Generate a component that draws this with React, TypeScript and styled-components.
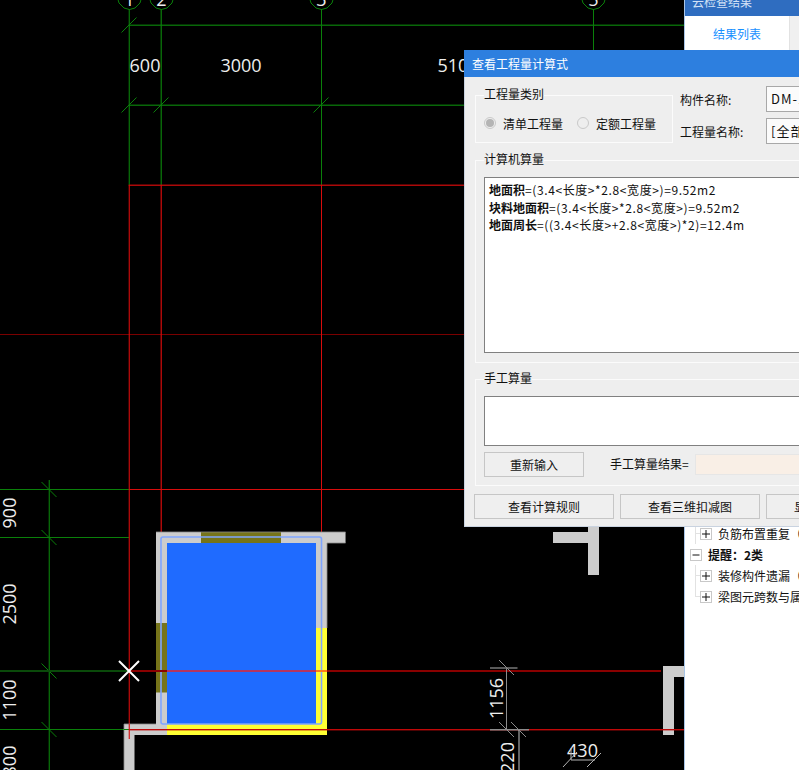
import React from 'react';
import styled, { createGlobalStyle } from 'styled-components';

const GlobalStyle = createGlobalStyle`
  html, body { margin: 0; padding: 0; background: #000; }
  body { font-family: "Noto Sans CJK SC", "Liberation Sans", sans-serif; font-size: 12px; color: #111; }
`;

const Page = styled.div`
  position: relative;
  display: flex;
  width: 799px;
  height: 770px;
  overflow: hidden;
  background: #000;
`;

const Canvas = styled.svg`
  display: block;
  flex: 0 0 684px;
  width: 684px;
  height: 770px;
  background: #000;
  text {
    font-family: "Open Sans", sans-serif;
    font-size: 18px;
    fill: #eeeeee;
  }
`;

const SidePanel = styled.aside`
  flex: 1;
  display: flex;
  flex-direction: column;
  border-left: 1px solid #a9c6e8;
  background: #fff;
`;

const PanelHeader = styled.div`
  height: 16px;
  display: flex;
  align-items: flex-end;
  overflow: hidden;
  padding: 0 0 6px 7px;
  box-sizing: border-box;
  background: #2f6dc0;
  color: #d3e2f6;
  line-height: 16px;
  white-space: nowrap;
  flex: none;
`;

const TabBar = styled.div`
  display: flex;
  height: 34px;
  background: #f0f0f0;
  flex: none;
`;

const Tab = styled.div`
  width: 104px;
  display: flex;
  align-items: center;
  justify-content: center;
  background: #fff;
  border-right: 1px solid #e2e2e2;
  color: #1890ff;
`;

const Tree = styled.div`
  padding-top: 473px;
  display: flex;
  flex-direction: column;
`;

const TreeRow = styled.div<{ $level: number; $last?: boolean }>`
  position: relative;
  height: 21px;
  display: flex;
  align-items: center;
  gap: 6px;
  padding-left: ${p => 5 + p.$level * 10}px;
  white-space: nowrap;
  font-weight: ${p => (p.$level === 0 ? 700 : 400)};

  ${p => p.$level === 1 && `
    &::before {
      content: '';
      position: absolute;
      left: 10px;
      top: 0;
      height: ${p.$last ? '10px' : '21px'};
      border-left: 1px solid #e2e2e2;
    }
    &::after {
      content: '';
      position: absolute;
      left: 10px;
      top: 10px;
      width: 5px;
      border-top: 1px solid #e2e2e2;
    }
  `}
`;

const ToggleBox = styled.svg`
  flex: none;
  width: 12px;
  height: 12px;
  background: #fff;
  position: relative;
  z-index: 1;
`;

const Dialog = styled.section`
  position: absolute;
  left: 464px;
  top: 50px;
  width: 470px;
  height: 477px;
  box-sizing: border-box;
  border-left: 1px solid #c9d3e0;
  border-bottom: 1px solid #c9d3e0;
  background: #eeeeee;
  display: flex;
  flex-direction: column;
`;

const TitleBar = styled.header`
  height: 27px;
  flex: none;
  margin-left: -1px;
  padding-left: 8px;
  display: flex;
  align-items: center;
  background: #2d7fdf;
  color: #fff;
`;

const DialogBody = styled.div`
  padding: 10px 10px 0;
  display: flex;
  flex-direction: column;
  gap: 8px;
`;

const TopRow = styled.div`
  display: flex;
  gap: 7px;
`;

const Group = styled.fieldset<{ $height: number; $width?: number }>`
  margin: 0;
  box-sizing: border-box;
  height: ${p => p.$height}px;
  width: ${p => (p.$width ? `${p.$width}px` : 'auto')};
  padding: 0 8px;
  border: 1px solid #fbfbfb;
  min-width: 0;
`;

const GroupTitle = styled.legend`
  margin-left: 0;
  padding: 0;
  height: 16px;
  line-height: 13px;
`;

const RadioRow = styled.div`
  display: flex;
  align-items: center;
  height: 24px;
  margin-top: 8px;
  white-space: nowrap;
`;

const RadioOption = styled.label`
  display: flex;
  align-items: center;
  gap: 7px;
  margin-right: 14px;
  flex: none;
`;

const RadioMark = styled.span<{ $checked?: boolean }>`
  width: 12px;
  height: 12px;
  box-sizing: border-box;
  border-radius: 50%;
  border: 1px solid #c9c9c9;
  background: #eee;
  display: flex;
  align-items: center;
  justify-content: center;
  &::after {
    content: '';
    width: 8px;
    height: 8px;
    border-radius: 50%;
    background: ${p => (p.$checked ? '#b4b4b4' : 'transparent')};
  }
`;

const FieldGrid = styled.div`
  display: grid;
  grid-template-columns: 86px 150px;
  grid-auto-rows: 26px;
  row-gap: 6px;
  margin-top: -1px;
  align-items: center;
`;

const FieldBox = styled.div`
  height: 26px;
  box-sizing: border-box;
  border: 1px solid #a8a8a8;
  background: #fbfbfb;
  padding-left: 4px;
  line-height: 24px;
  font-size: 13px;
  letter-spacing: 1px;
`;

const FormulaBox = styled.div`
  height: 176px;
  margin-top: 9px;
  box-sizing: border-box;
  border: 1px solid #808080;
  background: #fff;
  padding: 3px 4px;
`;

const FormulaLine = styled.div`
  height: 17.5px;
  line-height: 17.5px;
  white-space: nowrap;
  letter-spacing: 0.6px;
  b { font-weight: 700; letter-spacing: 0; }
`;

const ManualBox = styled.div`
  height: 50px;
  margin-top: 9px;
  box-sizing: border-box;
  border: 1px solid #808080;
  background: #fff;
`;

const ManualRow = styled.div`
  display: flex;
  align-items: center;
  margin-top: 6px;
`;

const PlainButton = styled.button<{ $width: number }>`
  width: ${p => p.$width}px;
  height: 25px;
  flex: none;
  margin: 0;
  padding: 0;
  box-sizing: border-box;
  border: 1px solid #c6c6c6;
  background: #efefef;
  color: #111;
  font: inherit;
  white-space: nowrap;
`;

const ResultLabel = styled.span`
  margin: 0 6px 2px 26px;
`;

const ResultBox = styled.div`
  width: 200px;
  height: 21px;
  margin-bottom: 1px;
  box-sizing: border-box;
  border: 1px solid #e6e6e6;
  background: #f9efe6;
`;

const ActionRow = styled.div`
  display: flex;
  gap: 6px;
  margin-left: -1px;
`;

const green = '#0a800a';
const red = '#d80c0c';

type Bar = [number, number, number, number];
type Seg = [number, number, number, number];

// the drawing's lines sit between pixels, so some bars are on fractional coordinates on purpose
const greenBars: Bar[] = [
  [128.7, 24.6, 555.3, 1.2], [128.7, 104.6, 555.3, 1.2],
  [128.7, 9, 1.1, 176], [160.6, 9, 1.2, 176], [321, 9, 1, 176], [593, 9, 1, 41],
  [0, 489, 129, 1], [0, 537, 129, 1], [0, 729, 124, 1],
  [48.7, 480, 1.1, 290],
];

const greenTicks: Seg[] = [
  [121.5, 32.5, 136.5, 17.5], [121.5, 112.5, 136.5, 97.5],
  [153.5, 112.5, 168.5, 97.5], [313.5, 112.5, 328.5, 97.5],
  [41.5, 482, 56.5, 497], [41.5, 530, 56.5, 545],
  [41.5, 663.5, 56.5, 678.5], [41.5, 722, 56.5, 737],
];

const redBars: Bar[] = [
  [128.7, 184.6, 335.3, 1.2], [128.7, 185, 1.1, 554],
  [160.6, 185, 1.2, 352], [321, 185, 1, 348],
  [129, 489, 335, 1],
];

const bubbles: [number, string][] = [[129, '1'], [161, '2'], [321, '3'], [593, '5']];

// grey wall pieces of the plan, x y w h
const walls: Bar[] = [
  [156, 532, 189, 11], [156, 532, 11, 203], [316, 532, 11, 96],
  [124, 724, 43, 11], [124, 724, 10.5, 46],
  [553, 532, 46, 11], [588, 527, 11, 48],
  [663, 666, 21, 11], [663, 666, 11, 69],
];

const sideDims: [number, number, string][] = [[513, 16, '900'], [604, 16, '2500'], [700, 16, '1100'], [761, 16, '800']];

const Plan = () => (
  <Canvas viewBox="0 0 684 770">
    {greenBars.map(([x, y, w, h], i) => <rect key={i} x={x} y={y} width={w} height={h} fill={green} />)}
    <rect x={0} y={334} width={464} height={1} fill="#7a0000" />
    {redBars.map(([x, y, w, h], i) => <rect key={i} x={x} y={y} width={w} height={h} fill={red} />)}
    {greenTicks.map((s, i) => <line key={i} x1={s[0]} y1={s[1]} x2={s[2]} y2={s[3]} stroke={green} />)}
    {bubbles.map(([x, n]) => (
      <g key={x}>
        <path d={`M${x - 12} -4 L${x - 10} 3 L${x - 5} 8 L${x + 0.5} 9.5 L${x + 6} 8 L${x + 11} 3 L${x + 13} -4`} fill="none" stroke={green} />
        <text x={x + 0.5} y={6} textAnchor="middle">{n}</text>
      </g>
    ))}
    <text x={145} y={72} textAnchor="middle">600</text>
    <text x={241} y={72} textAnchor="middle">3000</text>
    <text x={458} y={72} textAnchor="middle">5100</text>

    {walls.map(([x, y, w, h], i) => <rect key={i} x={x} y={y} width={w} height={h} fill="#cccccc" />)}
    <rect x={201} y={532} width={80} height={11} fill="#76741a" />
    <rect x={156} y={623} width={11} height={69.5} fill="#76741a" />
    <rect x={316} y={628} width={11} height={107} fill="#ffff33" />
    <rect x={167} y={724} width={160} height={11} fill="#ffff33" />
    <path d="M156 532 H345.5 V543 H327 V628 M124 770 V724 H156" fill="none" stroke="#8a8a8a" strokeWidth={0.8} />
    <rect x={167} y={543} width={149} height={181} fill="#1f6bff" />
    <rect x={161} y={537} width={160.5} height={187} rx={2} fill="none" stroke="#7fa5ff" strokeWidth={1.6} />

    <rect x={0} y={670} width={129} height={2} fill="#0a4a0a" />
    <rect x={129} y={670} width={532} height={2} fill="#8a0000" />
    <rect x={167} y={670} width={149} height={2} fill="#b5355f" />
    <rect x={316} y={670} width={11} height={2} fill="#ff7a1a" />
    <rect x={129} y={729} width={555} height={1.4} fill="#c00808" />
    <rect x={124} y={729} width={5} height={1} fill={green} />
    <rect x={128.7} y={724} width={1.1} height={15} fill={red} />
    <path d="M119 661 L139 681 M139 661 L119 681" stroke="#fff" strokeWidth={2} />

    {sideDims.map(([cy, x, label]) => (
      <text key={label} x={x} y={cy} textAnchor="middle" transform={`rotate(-90 ${x} ${cy})`}>{label}</text>
    ))}

    <line x1={506.5} y1={668} x2={506.5} y2={730} stroke="#8c8c8c" />
    <line x1={490} y1={668} x2={517.5} y2={668} stroke="#777" strokeWidth={1.5} />
    <rect x={490} y={729} width={39} height={1.5} fill="#8c8c8c" />
    <line x1={519} y1={730} x2={519} y2={770} stroke="#c8c8c8" />
    <path d="M499 660 L514 675 M499 722 L514 737 M511 722 L526 737" stroke="#8c8c8c" fill="none" />
    <text x={503} y={698.5} textAnchor="middle" transform="rotate(-90 503 698.5)">1156</text>
    <text x={514} y={757.5} textAnchor="middle" transform="rotate(-90 514 757.5)">220</text>
    <text x={582.5} y={756.5} textAnchor="middle">430</text>
    <path d="M571 760 H595 M571 748 V760 M563 767 L577 752 M587 767 L601 753" stroke="#b4b4b4" fill="none" />
  </Canvas>
);

const Toggle = ({ open }: { open?: boolean }) => (
  <ToggleBox viewBox="0 0 12 12">
    <rect x={0.5} y={0.5} width={11} height={11} fill="#fff" stroke="#c8c8c8" />
    <path d={open ? 'M2.5 6 H9.5' : 'M2 6 H10 M6 2 V10'} stroke="#111" fill="none" />
  </ToggleBox>
);

const formulas = [
  { name: '地面积', text: '=(3.4<长度>*2.8<宽度>)=9.52m2' },
  { name: '块料地面积', text: '=(3.4<长度>*2.8<宽度>)=9.52m2' },
  { name: '地面周长', text: '=((3.4<长度>+2.8<宽度>)*2)=12.4m' },
];

export default function App() {
  return (
    <Page>
      <GlobalStyle />
      <Plan />
      <SidePanel>
        <PanelHeader>云检查结果</PanelHeader>
        <TabBar>
          <Tab>结果列表</Tab>
        </TabBar>
        <Tree>
          <TreeRow $level={1}><Toggle />负筋布置重复（1）</TreeRow>
          <TreeRow $level={0}><Toggle open />提醒：2类</TreeRow>
          <TreeRow $level={1}><Toggle />装修构件遗漏（1）</TreeRow>
          <TreeRow $level={1} $last><Toggle />梁图元跨数与属性不符</TreeRow>
        </Tree>
      </SidePanel>

      <Dialog>
        <TitleBar>查看工程量计算式</TitleBar>
        <DialogBody>
          <TopRow>
            <Group $height={56} $width={198}>
              <GroupTitle>工程量类别</GroupTitle>
              <RadioRow>
                <RadioOption><RadioMark $checked />清单工程量</RadioOption>
                <RadioOption><RadioMark />定额工程量</RadioOption>
              </RadioRow>
            </Group>
            <FieldGrid>
              <span>构件名称:</span>
              <FieldBox>DM-1</FieldBox>
              <span>工程量名称:</span>
              <FieldBox>[全部]</FieldBox>
            </FieldGrid>
          </TopRow>

          <Group $height={211}>
            <GroupTitle>计算机算量</GroupTitle>
            <FormulaBox>
              {formulas.map(f => (
                <FormulaLine key={f.name}><b>{f.name}</b>{f.text}</FormulaLine>
              ))}
            </FormulaBox>
          </Group>

          <Group $height={115}>
            <GroupTitle>手工算量</GroupTitle>
            <ManualBox />
            <ManualRow>
              <PlainButton $width={100}>重新输入</PlainButton>
              <ResultLabel>手工算量结果=</ResultLabel>
              <ResultBox />
            </ManualRow>
          </Group>

          <ActionRow>
            <PlainButton $width={140}>查看计算规则</PlainButton>
            <PlainButton $width={140}>查看三维扣减图</PlainButton>
            <PlainButton $width={140}>显示详细计算式</PlainButton>
          </ActionRow>
        </DialogBody>
      </Dialog>
    </Page>
  );
}
